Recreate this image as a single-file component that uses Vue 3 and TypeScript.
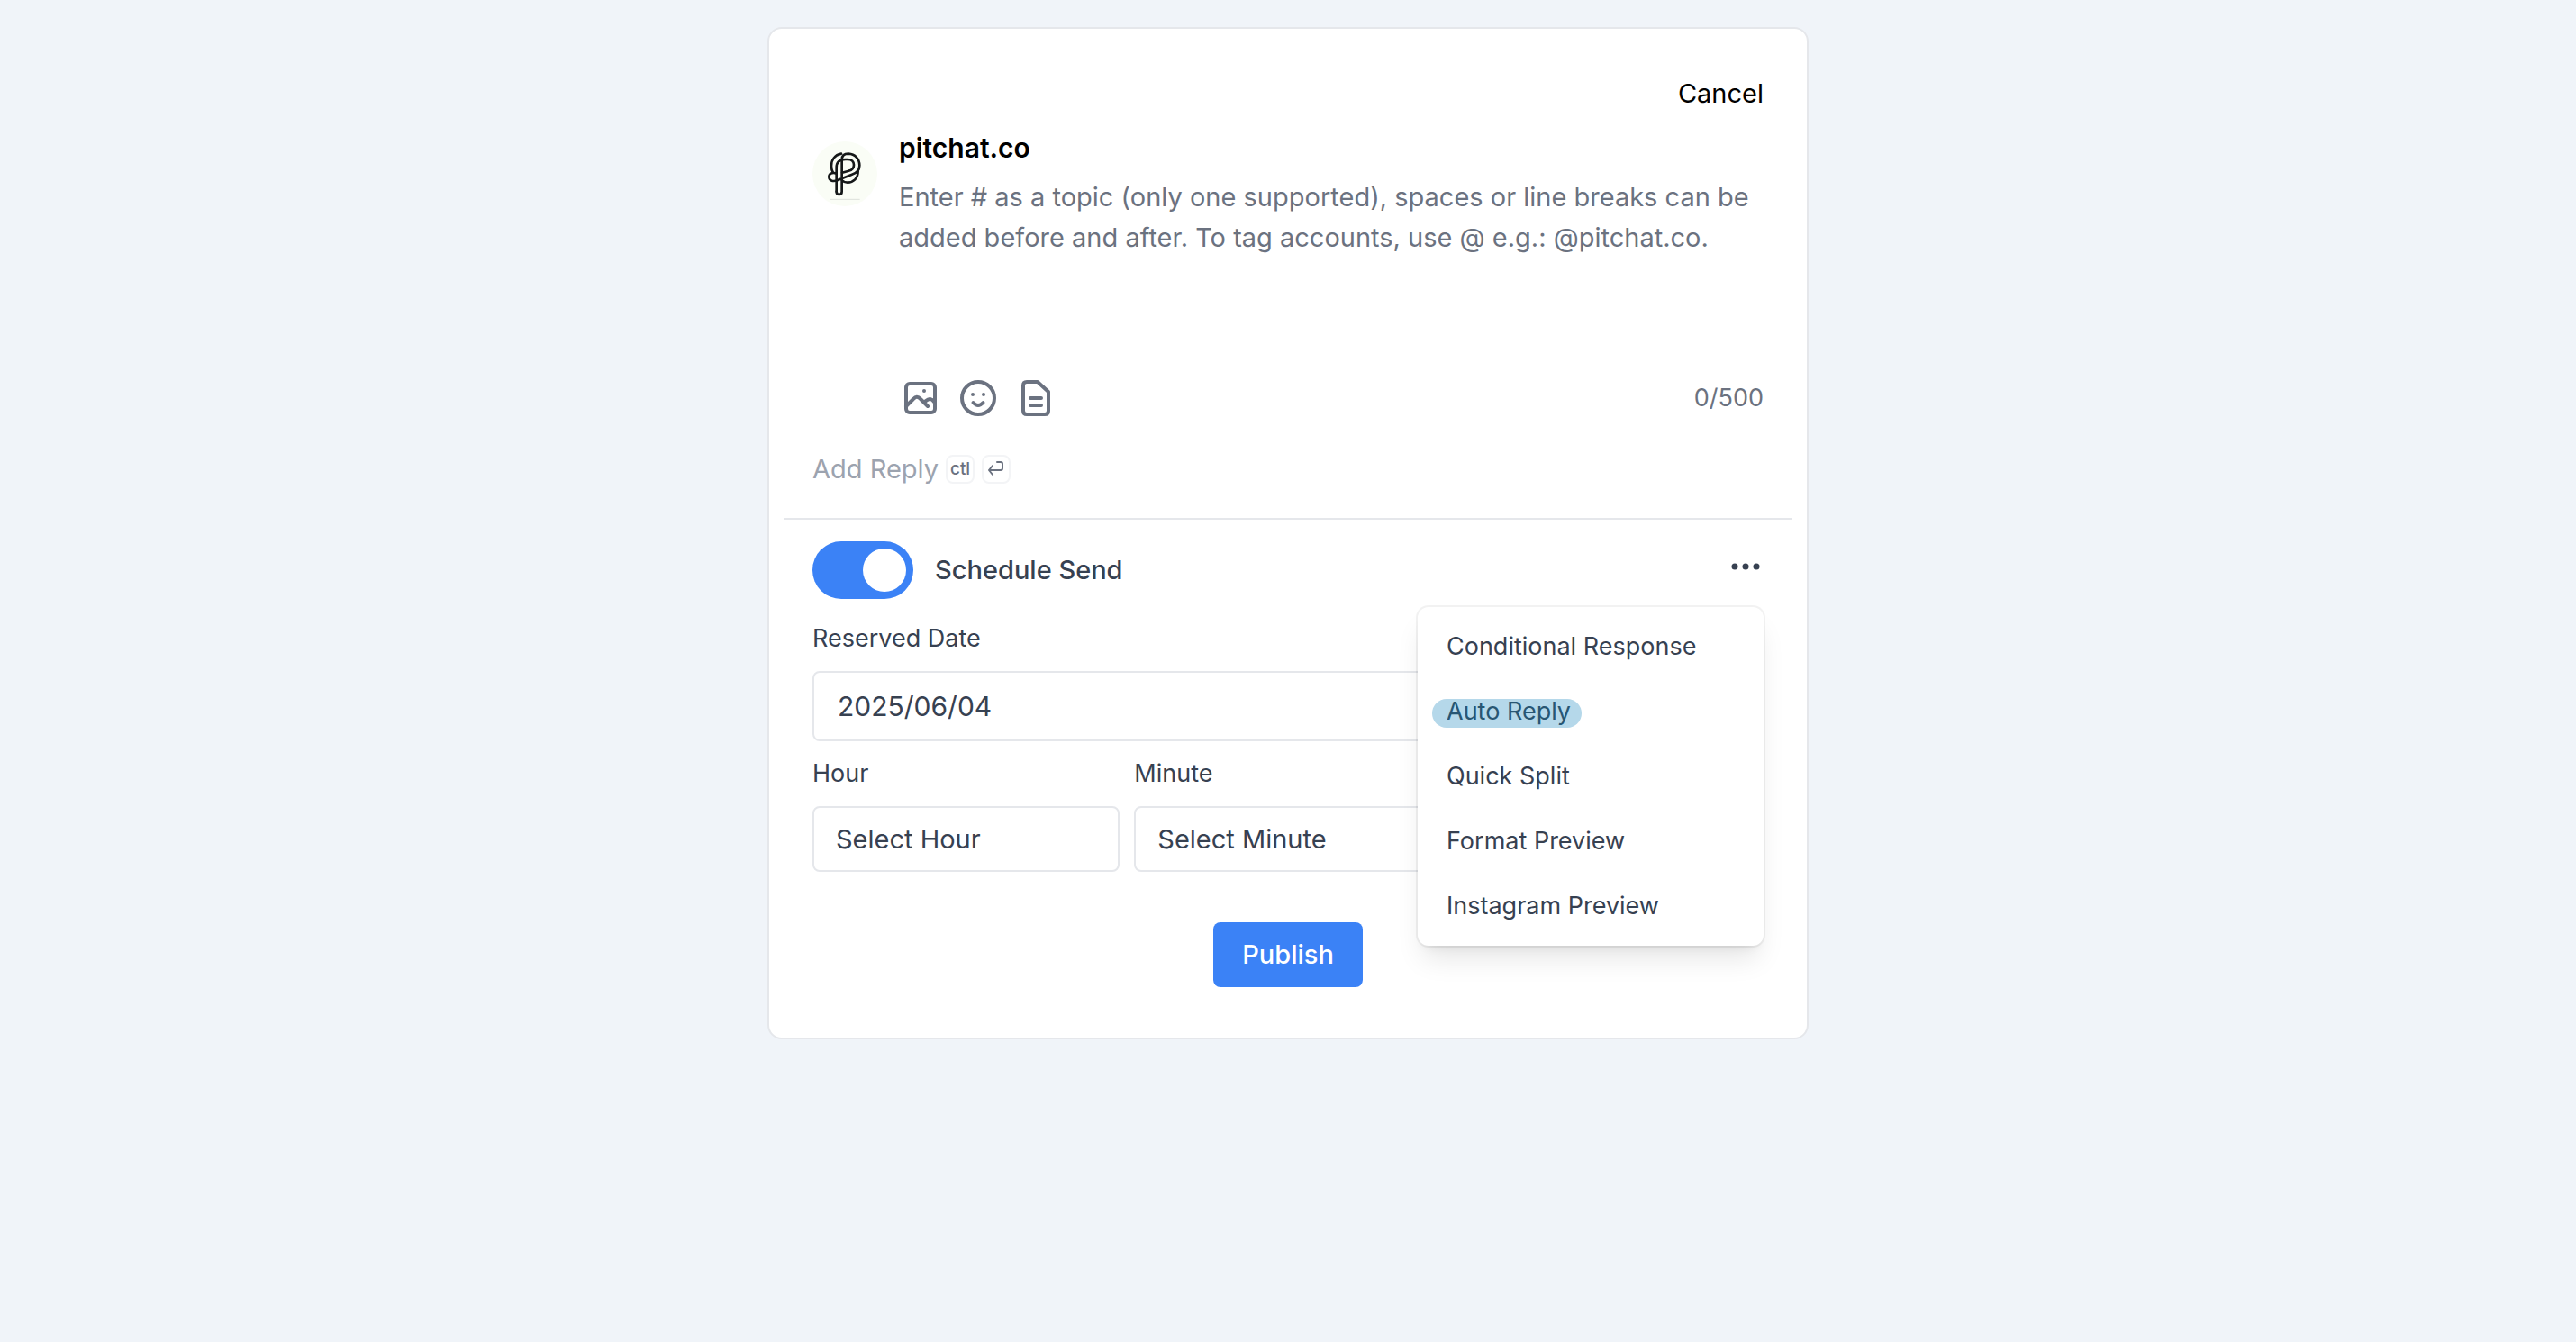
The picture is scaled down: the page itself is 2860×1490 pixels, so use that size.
<script setup lang="ts">
import { computed, ref } from 'vue'

const limit = 500
const content = ref('')
const scheduled = ref(true)
const date = ref('2025/06/04')
const hour = ref('')
const minute = ref('')
const counter = computed(() => `${content.value.length}/${limit}`)

const menu = [
  { label: 'Conditional Response', active: false },
  { label: 'Auto Reply', active: true },
  { label: 'Quick Split', active: false },
  { label: 'Format Preview', active: false },
  { label: 'Instagram Preview', active: false },
]
</script>

<template>
  <main class="page">
    <form class="card" @submit.prevent>
      <header class="top">
        <button type="button" class="cancel">Cancel</button>
      </header>

      <section class="composer">
        <svg class="avatar" viewBox="66 51 216 216" role="img" aria-label="pitchat.co">
          <circle cx="174" cy="159" r="108" fill="#fafdf6" />
          <g fill="none" stroke="#151819" stroke-width="8" stroke-linecap="round" stroke-linejoin="round">
            <path d="M146 218V138C146 119 158 111 176 111H184C197 111 204 119 204 129C204 141 197 147 187 149L165 155" />
            <path d="M146 218C146 231 164 231 164 218V112C164 99 172 92 186 92C208 93 223 110 223 131C223 148 212 157 196 162L150 180C136 186 121 183 121 169C121 158 131 154 144 157" />
            <path d="M162 92C140 96 129 113 129 133C129 142 131 149 135 155" />
            <path d="M218 151C218 174 202 188 183 188C176 188 170 186 165 181" />
          </g>
          <path d="M125 244H224" stroke="#dde0da" stroke-width="3" />
        </svg>
        <div class="body">
          <label class="author" for="content">pitchat.co</label>
          <textarea
            id="content"
            v-model="content"
            class="content"
            :maxlength="limit"
            placeholder="Enter # as a topic (only one supported), spaces or line breaks can be added before and after. To tag accounts, use @ e.g.: @pitchat.co."
          ></textarea>
          <div class="tools">
            <button type="button" class="tool" aria-label="Add image">
              <svg viewBox="0 0 48 48">
                <rect x="8" y="8" width="32" height="32" rx="4" />
                <path d="M8 33L16 25Q20 20.500 24 25L32 33M28 29L30 27Q35 22.500 39 28" />
                <circle class="dot" cx="28" cy="16" r="2" />
              </svg>
            </button>
            <button type="button" class="tool" aria-label="Add emoji">
              <svg viewBox="0 0 48 48">
                <circle cx="24" cy="24" r="18" />
                <path d="M18.500 29Q24 35 29.500 29" />
                <circle class="dot" cx="18" cy="20" r="2" />
                <circle class="dot" cx="30" cy="20" r="2" />
              </svg>
            </button>
            <button type="button" class="tool" aria-label="Add document">
              <svg viewBox="0 0 48 48">
                <path d="M26 6H14Q10 6 10 10V38Q10 42 14 42H34Q38 42 38 38V17ZM18 24H30M18 32H30" />
              </svg>
            </button>
            <output class="counter" for="content">{{ counter }}</output>
          </div>
        </div>
      </section>

      <button type="button" class="add-reply">
        Add Reply
        <kbd>ctl</kbd>
        <kbd>
          <svg viewBox="0 0 32 32" aria-label="Enter">
            <path d="M17 8H21Q23 8 23 10V15Q23 17 21 17H8M12 12L8 17L12 22" />
          </svg>
        </kbd>
      </button>

      <hr class="divider" />

      <section class="schedule">
        <div class="schedule-head">
          <label class="switch">
            <input v-model="scheduled" type="checkbox" role="switch" />
            <span>Schedule Send</span>
          </label>
          <div class="more">
            <button type="button" class="more-button" aria-label="More options" aria-expanded="true">
              <svg viewBox="0 0 36 24">
                <circle cx="6" cy="12" r="3.500" />
                <circle cx="18" cy="12" r="3.500" />
                <circle cx="30" cy="12" r="3.500" />
              </svg>
            </button>
            <div class="menu" role="menu">
              <button
                v-for="item in menu"
                :key="item.label"
                type="button"
                role="menuitem"
                class="menu-item"
                :class="{ active: item.active }"
              >
                <span>{{ item.label }}</span>
              </button>
            </div>
          </div>
        </div>

        <div class="field">
          <label for="date">Reserved Date</label>
          <input id="date" v-model="date" class="date" type="text" />
        </div>
        <div class="times">
          <div class="field">
            <label for="hour">Hour</label>
            <select id="hour" v-model="hour">
              <option value="">Select Hour</option>
              <option v-for="h in 24" :key="h" :value="String(h - 1)">{{ h - 1 }}</option>
            </select>
          </div>
          <div class="field">
            <label for="minute">Minute</label>
            <select id="minute" v-model="minute">
              <option value="">Select Minute</option>
              <option v-for="m in 60" :key="m" :value="String(m - 1)">{{ m - 1 }}</option>
            </select>
          </div>
        </div>
      </section>

      <button type="submit" class="publish">Publish</button>
    </form>
  </main>
</template>

<style>
html {
  background: #f0f4f9;
}
</style>

<style scoped>
.page,
.page * {
  box-sizing: border-box;
}

.page {
  padding: 30px 24px;
  font-family: Inter, 'Liberation Sans', sans-serif;
  font-size: 29px;
  line-height: 44px;
  color: #374151;
}

button,
input,
select,
textarea {
  margin: 0;
  padding: 0;
  border: 0;
  background: none;
  font: inherit;
  color: inherit;
}

button {
  cursor: pointer;
}

.card {
  display: flex;
  flex-direction: column;
  max-width: 1156px;
  margin: 0 auto;
  padding: 50px 16px 56px;
  border: 2px solid #e5e7eb;
  border-radius: 16px;
  background: #fff;
}

.top,
.composer,
.schedule {
  padding: 0 32px;
}

.top {
  display: flex;
  justify-content: flex-end;
}

.cancel {
  color: #000;
}

.composer {
  display: flex;
  gap: 24px;
  margin-top: 16px;
}

.avatar {
  flex: none;
  width: 72px;
  height: 72px;
  margin-top: 15px;
}

.body {
  flex: 1;
  display: flex;
  flex-direction: column;
  min-width: 0;
}

.author {
  font-size: 30px;
  font-weight: 600;
  color: #000;
}

.content {
  width: 100%;
  height: 190px;
  margin-top: 10px;
  resize: none;
  outline: none;
  line-height: 45px;
}

.content::placeholder {
  color: #6b7280;
  opacity: 1;
}

.tools {
  display: flex;
  align-items: center;
  gap: 16px;
  margin-top: 32px;
  color: #6b7280;
}

.tool,
.tool svg {
  display: block;
  width: 48px;
  height: 48px;
}

.tool svg {
  fill: none;
  stroke: currentColor;
  stroke-width: 4;
  stroke-linecap: round;
  stroke-linejoin: round;
}

.tool .dot {
  fill: currentColor;
  stroke: none;
}

.counter {
  margin-left: auto;
  font-size: 27px;
}

.add-reply {
  display: flex;
  align-items: center;
  align-self: flex-start;
  gap: 8px;
  margin: 33px 32px 0;
  color: #9ca3af;
}

kbd {
  display: flex;
  align-items: center;
  justify-content: center;
  width: 32px;
  height: 32px;
  border: 2px solid #f3f4f6;
  border-radius: 8px;
  font-family: inherit;
  font-size: 19px;
  font-weight: 500;
  color: #6b7280;
}

kbd svg {
  flex: none;
  width: 32px;
  height: 32px;
  fill: none;
  stroke: currentColor;
  stroke-width: 2;
  stroke-linecap: round;
  stroke-linejoin: round;
}

.divider {
  width: 100%;
  height: 2px;
  margin: 32px 0 24px;
  border: 0;
  background: #e5e7eb;
}

.schedule-head {
  display: flex;
  justify-content: space-between;
}

.switch {
  display: flex;
  align-items: center;
  gap: 24px;
  font-weight: 500;
}

.switch input {
  appearance: none;
  display: flex;
  align-items: center;
  width: 112px;
  height: 64px;
  padding: 8px;
  border-radius: 32px;
  background: #d1d5db;
}

.switch input::before {
  content: '';
  width: 48px;
  height: 48px;
  border-radius: 50%;
  background: #fff;
}

.switch input:checked {
  justify-content: flex-end;
  background: #3b82f6;
}

.more {
  position: relative;
}

.more-button {
  display: flex;
  align-items: center;
  height: 56px;
  padding: 0 2px;
}

.more svg {
  width: 36px;
  height: 24px;
  fill: #374151;
}

.menu {
  position: absolute;
  top: 73px;
  right: 0;
  width: 384px;
  padding: 8px 0;
  border-radius: 12px;
  background: #fff;
  box-shadow:
    0 0 0 2px rgba(0, 0, 0, 0.05),
    0 20px 30px -6px rgba(0, 0, 0, 0.1),
    0 8px 12px -8px rgba(0, 0, 0, 0.1);
}

.menu-item {
  display: flex;
  align-items: center;
  width: 100%;
  height: 72px;
  padding: 4px 16px 0;
  font-size: 27px;
}

.menu-item span {
  padding: 0 12px 4px 16px;
  border-radius: 16px;
  line-height: 28px;
}

.menu-item.active span {
  background: #b5d8ea;
  color: #285673;
}

.field {
  display: flex;
  flex-direction: column;
  gap: 16px;
}

.field label {
  font-size: 27px;
  line-height: 40px;
}

.field input,
.field select {
  width: 100%;
  height: 73px;
  padding: 0 24px;
  border: 2px solid #e5e7eb;
  border-radius: 8px;
  background: #fff;
  appearance: none;
}

.field .date {
  height: 78px;
  padding: 0 26px;
  font-size: 30px;
}

.schedule > .field {
  margin-top: 24px;
}

.times {
  display: grid;
  grid-template-columns: repeat(3, 1fr);
  gap: 16px;
  margin-top: 16px;
}

.publish {
  align-self: center;
  height: 72px;
  margin-top: 56px;
  padding: 0 32px;
  border-radius: 8px;
  background: #3b82f6;
  color: #fff;
  font-weight: 500;
}
</style>
